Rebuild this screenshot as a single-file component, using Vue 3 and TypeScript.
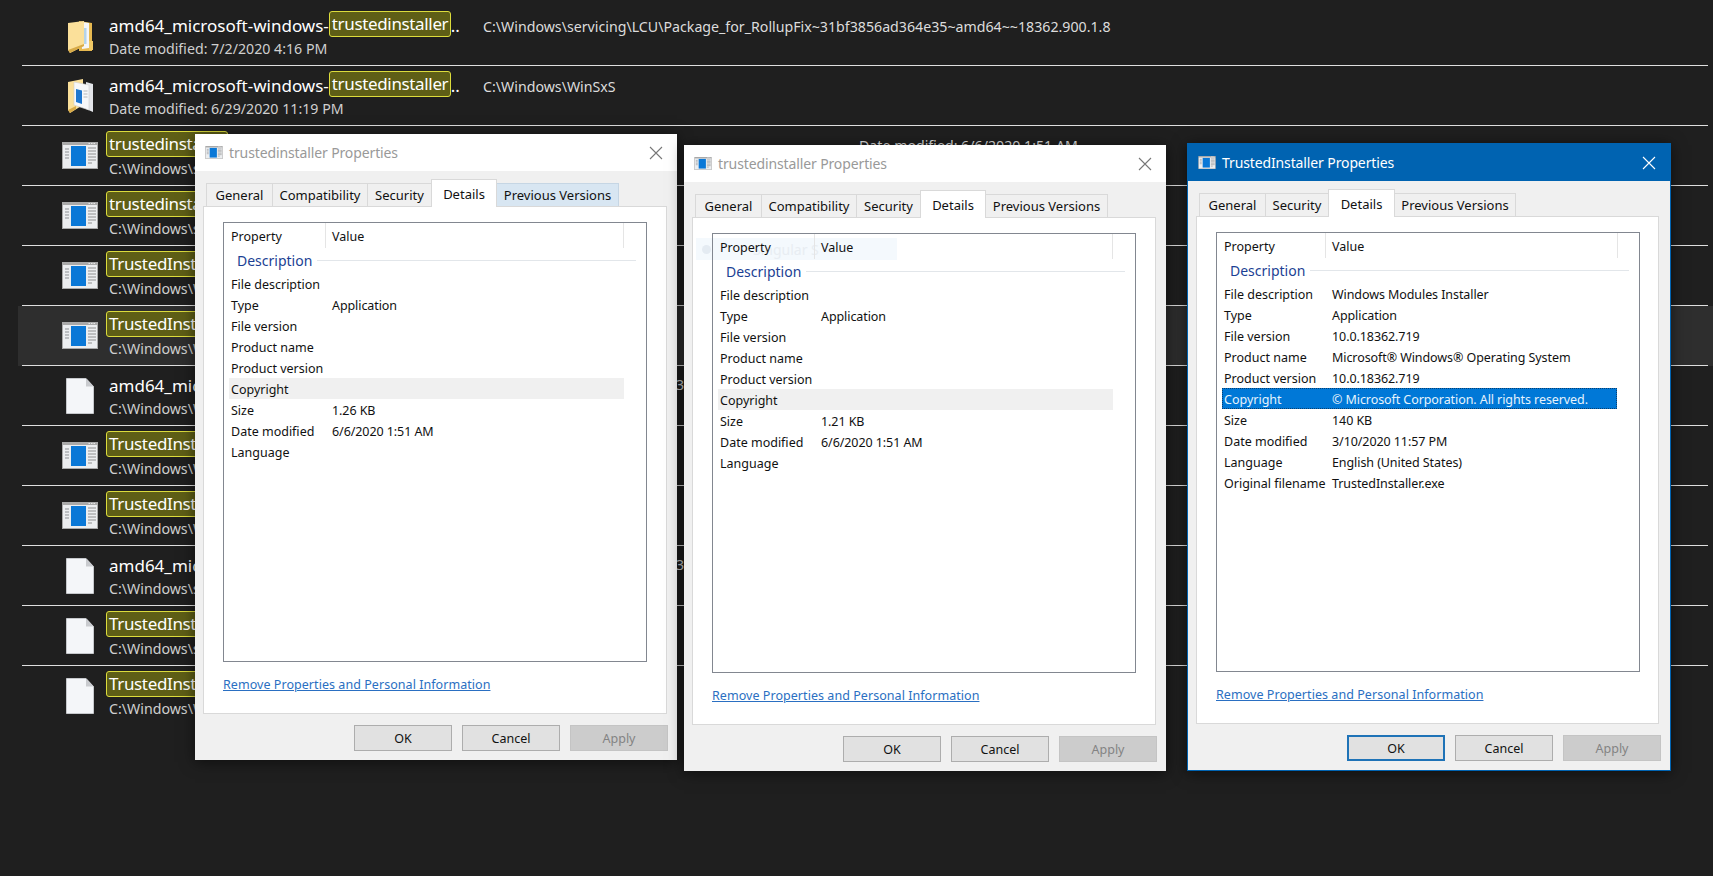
<script setup lang="ts">
type Row = {
  icon: 'folder' | 'folder-doc' | 'exe' | 'file'
  lead?: string
  mark?: string
  rest?: string
  sub: string
  aux?: string
  auxClass?: string
  hover?: boolean
}

const ROWS: Row[] = [
  { icon: 'folder', lead: 'amd64_microsoft-windows-', mark: 'trustedinstaller', rest: '..', sub: 'Date modified: 7/2/2020 4:16 PM', aux: 'C:\\Windows\\servicing\\LCU\\Package_for_RollupFix~31bf3856ad364e35~amd64~~18362.900.1.8' },
  { icon: 'folder-doc', lead: 'amd64_microsoft-windows-', mark: 'trustedinstaller', rest: '..', sub: 'Date modified: 6/29/2020 11:19 PM', aux: 'C:\\Windows\\WinSxS' },
  { icon: 'exe', mark: 'trustedinstaller', sub: 'C:\\Windows\\servicing', aux: 'Date modified: 6/6/2020 1:51 AM', auxClass: 'aux--date' },
  { icon: 'exe', mark: 'trustedinstaller', sub: 'C:\\Windows\\servicing' },
  { icon: 'exe', mark: 'TrustedInstaller', sub: 'C:\\Windows\\WinSxS' },
  { icon: 'exe', mark: 'TrustedInstaller', sub: 'C:\\Windows\\WinSxS', hover: true },
  { icon: 'file', lead: 'amd64_microsoft-windows', sub: 'C:\\Windows\\WinSxS', aux: '31bf3856ad364e35', auxClass: 'aux--tail' },
  { icon: 'exe', mark: 'TrustedInstaller', sub: 'C:\\Windows\\WinSxS' },
  { icon: 'exe', mark: 'TrustedInstaller', sub: 'C:\\Windows\\WinSxS' },
  { icon: 'file', lead: 'amd64_microsoft-windows', sub: 'C:\\Windows\\servicing', aux: '31bf3856ad364e35', auxClass: 'aux--tail' },
  { icon: 'file', mark: 'TrustedInstaller', sub: 'C:\\Windows\\servicing' },
  { icon: 'file', mark: 'TrustedInstaller', sub: 'C:\\Windows\\WinSxS' },
]

type Tab = { label: string; width: number; active?: boolean; hot?: boolean }
type Prop = { name: string; value?: string; mark?: 'soft' | 'selected' }
type Dialog = { key: string; title: string; focused?: boolean; ghost?: boolean; tabs: Tab[]; props: Prop[] }

const blankProps = (size: string, date: string): Prop[] => [
  { name: 'File description' },
  { name: 'Type', value: 'Application' },
  { name: 'File version' },
  { name: 'Product name' },
  { name: 'Product version' },
  { name: 'Copyright', mark: 'soft' },
  { name: 'Size', value: size },
  { name: 'Date modified', value: date },
  { name: 'Language' },
]

const DIALOGS: Dialog[] = [
  {
    key: 'one',
    title: 'trustedinstaller Properties',
    tabs: [
      { label: 'General', width: 67 },
      { label: 'Compatibility', width: 96 },
      { label: 'Security', width: 65 },
      { label: 'Details', width: 66, active: true },
      { label: 'Previous Versions', width: 123, hot: true },
    ],
    props: blankProps('1.26 KB', '6/6/2020 1:51 AM'),
  },
  {
    key: 'two',
    title: 'trustedinstaller Properties',
    ghost: true,
    tabs: [
      { label: 'General', width: 67 },
      { label: 'Compatibility', width: 96 },
      { label: 'Security', width: 65 },
      { label: 'Details', width: 66, active: true },
      { label: 'Previous Versions', width: 123 },
    ],
    props: blankProps('1.21 KB', '6/6/2020 1:51 AM'),
  },
  {
    key: 'three',
    title: 'TrustedInstaller Properties',
    focused: true,
    tabs: [
      { label: 'General', width: 67 },
      { label: 'Security', width: 64 },
      { label: 'Details', width: 67, active: true },
      { label: 'Previous Versions', width: 122 },
    ],
    props: [
      { name: 'File description', value: 'Windows Modules Installer' },
      { name: 'Type', value: 'Application' },
      { name: 'File version', value: '10.0.18362.719' },
      { name: 'Product name', value: 'Microsoft® Windows® Operating System' },
      { name: 'Product version', value: '10.0.18362.719' },
      { name: 'Copyright', value: '© Microsoft Corporation. All rights reserved.', mark: 'selected' },
      { name: 'Size', value: '140 KB' },
      { name: 'Date modified', value: '3/10/2020 11:57 PM' },
      { name: 'Language', value: 'English (United States)' },
      { name: 'Original filename', value: 'TrustedInstaller.exe' },
    ],
  },
]
</script>

<template>
  <div class="desktop">
    <svg class="sprites" aria-hidden="true">
      <symbol id="i-exe" viewBox="0 0 36 27">
        <rect width="36" height="27" fill="#a9a9a9" />
        <rect x="1" y="3" width="34" height="23" fill="#eceef0" />
        <path d="M29 1h1.500v1H29zM31.500 1H33v1h-1.500zM26.500 1H28v1h-1.500z" fill="#e6e6e6" />
        <rect x="9" y="4" width="15" height="20" fill="#0a78d7" />
        <path d="M3 7h4M3 10h4M3 13h4M3 16h4" stroke="#8b8f94" stroke-width="1.200" />
        <path d="M26 6h8M26 9h8M26 12h8M26 15h8M26 18h8M26 21h4" stroke="#8f8f8f" stroke-width="1.200" />
      </symbol>
      <symbol id="i-file" viewBox="0 0 28 36">
        <path d="M0.500 0.500H20L27.500 8.500V35.500H0.500z" fill="#f4f6f9" stroke="#c6c8cc" />
        <path d="M20 0.500V8.500H27.500z" fill="#c9cbcf" />
      </symbol>
      <symbol id="i-folder" viewBox="0 0 27 34">
        <path d="M12 2L25 4V32H12z" fill="#e7b950" />
        <path d="M15 3L22 4V29L15 30z" fill="#f5f6f8" />
        <path d="M17 9h2.500v16H17z" fill="#b5d3e8" />
        <path d="M1 4L17 2V27L3 34L1 31z" fill="#fbe09a" />
        <path d="M1 31L3 34L17 27V25z" fill="#d8ab48" />
        <path d="M22 22h4v9h-4z" fill="#efc865" />
      </symbol>
      <symbol id="i-folder-doc" viewBox="0 0 27 34">
        <path d="M1 3L16 0V26L3 34L1 31z" fill="#fbe09a" />
        <path d="M19 3L26 5V33L19 30z" fill="#e4e6ea" />
        <path d="M7 3L22 6V31L7 26z" fill="#f7f8fa" stroke="#d0d0d0" stroke-width="0.600" />
        <path d="M9 10L15 11.500V25L9 23z" fill="#1f77cf" />
        <path d="M16.500 12h4M16.500 15h4M16.500 18h4" stroke="#b8b8b8" />
        <path d="M1 31L3 34L9 30V27z" fill="#d8ab48" />
      </symbol>
    </svg>

    <div class="results">
      <div v-for="(r, i) in ROWS" :key="i" class="row" :class="{ 'row--hover': r.hover }">
        <div class="row__inner" :class="{ 'row__inner--last': i === ROWS.length - 1 }">
          <div class="row__icon">
            <svg v-if="r.icon === 'exe'" width="36" height="27"><use href="#i-exe" /></svg>
            <svg v-else-if="r.icon === 'file'" width="28" height="36"><use href="#i-file" /></svg>
            <svg v-else-if="r.icon === 'folder'" width="27" height="34"><use href="#i-folder" /></svg>
            <svg v-else width="27" height="34"><use href="#i-folder-doc" /></svg>
          </div>
          <div class="row__text">
            <div class="row__name">
              <span v-if="r.lead">{{ r.lead }}</span>
              <span v-if="r.mark" class="hit" :class="{ 'hit--first': !r.lead }">{{ r.mark }}</span>
              <span v-if="r.rest">{{ r.rest }}</span>
            </div>
            <div class="row__sub">{{ r.sub }}</div>
          </div>
          <div v-if="r.aux" class="aux" :class="r.auxClass">{{ r.aux }}</div>
        </div>
      </div>
    </div>

    <section
      v-for="d in DIALOGS"
      :key="d.key"
      class="dialog"
      :class="['dialog--' + d.key, { 'dialog--focused': d.focused }]"
    >
      <header class="dialog__title">
        <svg class="dialog__icon" width="18" height="13"><use href="#i-exe" /></svg>
        <span class="dialog__caption">{{ d.title }}</span>
        <svg class="dialog__close" width="14" height="14" viewBox="0 0 14 14">
          <path d="M1 1L13 13M13 1L1 13" stroke="currentColor" stroke-width="1.100" fill="none" />
        </svg>
      </header>

      <nav class="tabs">
        <div
          v-for="t in d.tabs"
          :key="t.label"
          class="tab"
          :class="{ 'tab--active': t.active, 'tab--hot': t.hot }"
          :style="{ width: t.width + 'px' }"
        >{{ t.label }}</div>
      </nav>

      <div class="panel">
        <div v-if="d.ghost" class="ghost"><i class="ghost__dot"></i><span class="ghost__text">Singular S</span></div>
        <div class="props">
          <div class="props__head">
            <div class="props__col props__col--name">Property</div>
            <div class="props__col props__col--value">Value</div>
          </div>
          <div class="props__group"><span>Description</span></div>
          <div
            v-for="p in d.props"
            :key="p.name"
            class="prop"
            :class="p.mark ? 'prop--' + p.mark : ''"
          >
            <span>{{ p.name }}</span>
            <span class="prop__value">{{ p.value }}</span>
          </div>
        </div>
        <a class="remove">Remove Properties and Personal Information</a>
      </div>

      <footer class="buttons">
        <button class="btn" :class="{ 'btn--default': d.focused }">OK</button>
        <button class="btn">Cancel</button>
        <button class="btn btn--off">Apply</button>
      </footer>
    </section>
  </div>
</template>

<style>
html, body { margin: 0; background: #1f1f1f; }
</style>

<style scoped>
.desktop {
  position: relative;
  width: 1713px;
  height: 876px;
  overflow: hidden;
  background: #1f1f1f;
  font-family: "Noto Sans", "Open Sans", sans-serif;
}
.sprites { position: absolute; width: 0; height: 0; }

/* search results behind the windows */
.results { padding: 6px 0 0 18px; }
.row { height: 60px; }
.row--hover { background: #2e2e2e; }
.row__inner {
  box-sizing: border-box;
  height: 60px;
  margin: 0 5px 0 4px;
  display: flex;
  border-bottom: 1px solid #dedede;
}
.row__inner--last { border-bottom: none; }
.row__icon {
  flex: none;
  width: 36px;
  margin-left: 40px;
  display: flex;
  align-items: center;
  justify-content: center;
}
.row__icon svg { display: block; }
.row__text {
  flex: none;
  width: 374px;
  margin-left: 11px;
  padding-top: 7px;
  color: #fff;
}
.row__name {
  display: flex;
  align-items: center;
  height: 24px;
  font-size: 17px;
  white-space: nowrap;
}
.row__sub {
  height: 24px;
  line-height: 24px;
  font-size: 14.200px;
  color: #cfcfcf;
  white-space: nowrap;
}
.hit {
  box-sizing: border-box;
  flex: none;
  width: 122px;
  height: 26px;
  margin-top: -2px;
  padding: 0 2px;
  line-height: 24px;
  letter-spacing: -0.350px;
  background: #5e5e16;
  border: 1px solid #dcdc3c;
  border-radius: 3px;
  overflow: hidden;
}
.hit--first { margin-left: -3px; }
.aux {
  margin-top: 9px;
  height: 24px;
  line-height: 24px;
  font-size: 14.200px;
  color: #dcdcdc;
  white-space: nowrap;
}
.aux--date { margin-left: 376px; margin-top: 8px; }
.aux--tail { margin-left: 193px; margin-top: 7px; }

/* property windows */
.dialog {
  position: absolute;
  box-sizing: border-box;
  display: flex;
  flex-direction: column;
  background: #f0f0f0;
  box-shadow: 0 2px 14px rgba(0, 0, 0, 0.55);
  color: #111;
  font-size: 12.500px;
  --head-col: 102px;
  --value-col: 298px;
  --prop-col: 101px;
}
.dialog--one { left: 195px; top: 134px; width: 482px; height: 626px; }
.dialog--two { left: 684px; top: 145px; width: 482px; height: 626px; }
.dialog--three {
  left: 1187px;
  top: 143px;
  width: 484px;
  height: 628px;
  border: 1px solid #0063b1;
  --head-col: 109px;
  --value-col: 292px;
  --prop-col: 108px;
}

.dialog__title {
  flex: none;
  height: 37px;
  display: flex;
  align-items: center;
  padding: 0 14px 0 10px;
  background: #fff;
  color: #999;
}
.dialog--focused .dialog__title { background: #0063b1; color: #fff; }
.dialog__icon { flex: none; }
.dialog__caption { flex: 1; margin-left: 6px; font-size: 14px; letter-spacing: -0.120px; }
.dialog__close { flex: none; color: #777; }
.dialog--focused .dialog__close { color: #fff; }

.tabs {
  position: relative;
  z-index: 1;
  flex: none;
  height: 27px;
  margin-top: 8px;
  padding-left: 11px;
  display: flex;
  align-items: flex-end;
  font-size: 13px;
}
.tab {
  box-sizing: border-box;
  height: 23px;
  display: flex;
  align-items: center;
  justify-content: center;
  background: #f0f0f0;
  border: 1px solid #d9d9d9;
  border-bottom: none;
  margin-right: -1px;
  white-space: nowrap;
}
.tab--hot { background: #d8e6f2; border-color: #c6d6e4; }
.tab--active {
  position: relative;
  z-index: 1;
  height: 28px;
  margin-bottom: -1px;
  background: #fff;
}

.panel {
  position: relative;
  box-sizing: border-box;
  flex: none;
  width: 464px;
  height: 508px;
  margin-left: 8px;
  padding: 15px 19px 0;
  background: #fff;
  border: 1px solid #d9d9d9;
}
.dialog--three .panel { width: 463px; }

.ghost {
  position: absolute;
  left: 3px;
  top: 20px;
  width: 201px;
  height: 22px;
  display: flex;
  align-items: center;
  background: #f4f9fd;
  color: #e8edf2;
  font-size: 14px;
}
.ghost__dot { width: 9px; height: 9px; margin-left: 6px; border-radius: 50%; background: #e4ebf2; }
.ghost__text { margin-left: 42px; }

.props {
  position: relative;
  box-sizing: border-box;
  width: 424px;
  height: 440px;
  border: 1px solid #828790;
}
.props__head { display: flex; height: 25px; }
.props__col {
  box-sizing: border-box;
  height: 25px;
  line-height: 27px;
  border-right: 1px solid #e5e5e5;
}
.props__col--name { width: var(--head-col); padding-left: 7px; }
.props__col--value { width: var(--value-col); padding-left: 6px; }
.props__group {
  height: 25px;
  display: flex;
  align-items: center;
  padding: 0 10px 0 13px;
  color: #1c3f94;
  font-size: 14px;
}
.props__group::after {
  content: "";
  flex: 1;
  height: 1px;
  margin-left: 5px;
  background: #e2e6ea;
}
.prop {
  box-sizing: border-box;
  display: grid;
  grid-template-columns: var(--prop-col) 1fr;
  width: 395px;
  height: 21px;
  line-height: 19px;
  margin-left: 5px;
  padding: 1px 0 0 1px;
  border: 1px solid transparent;
  white-space: nowrap;
}
.prop__value { letter-spacing: -0.080px; }
.prop--soft { background: #f0f0f0; }
.prop--selected {
  background: #0078d7;
  color: #e6f3fd;
  border: 1px dotted #0b3f6e;
}

.remove {
  display: block;
  width: max-content;
  margin-top: 13px;
  line-height: 19px;
  letter-spacing: 0.050px;
  color: #2a6fc2;
  text-decoration: underline;
}

.buttons {
  flex: none;
  display: flex;
  justify-content: flex-end;
  gap: 10px;
  padding: 11px 9px 0 0;
}
.btn {
  box-sizing: border-box;
  width: 98px;
  height: 26px;
  padding: 0;
  background: #e1e1e1;
  border: 1px solid #adadad;
  color: #111;
  font: inherit;
}
.btn--default { border: 2px solid #1f73b7; }
.btn--off { background: #cccccc; border-color: #c4c4c4; color: #838383; }
</style>
